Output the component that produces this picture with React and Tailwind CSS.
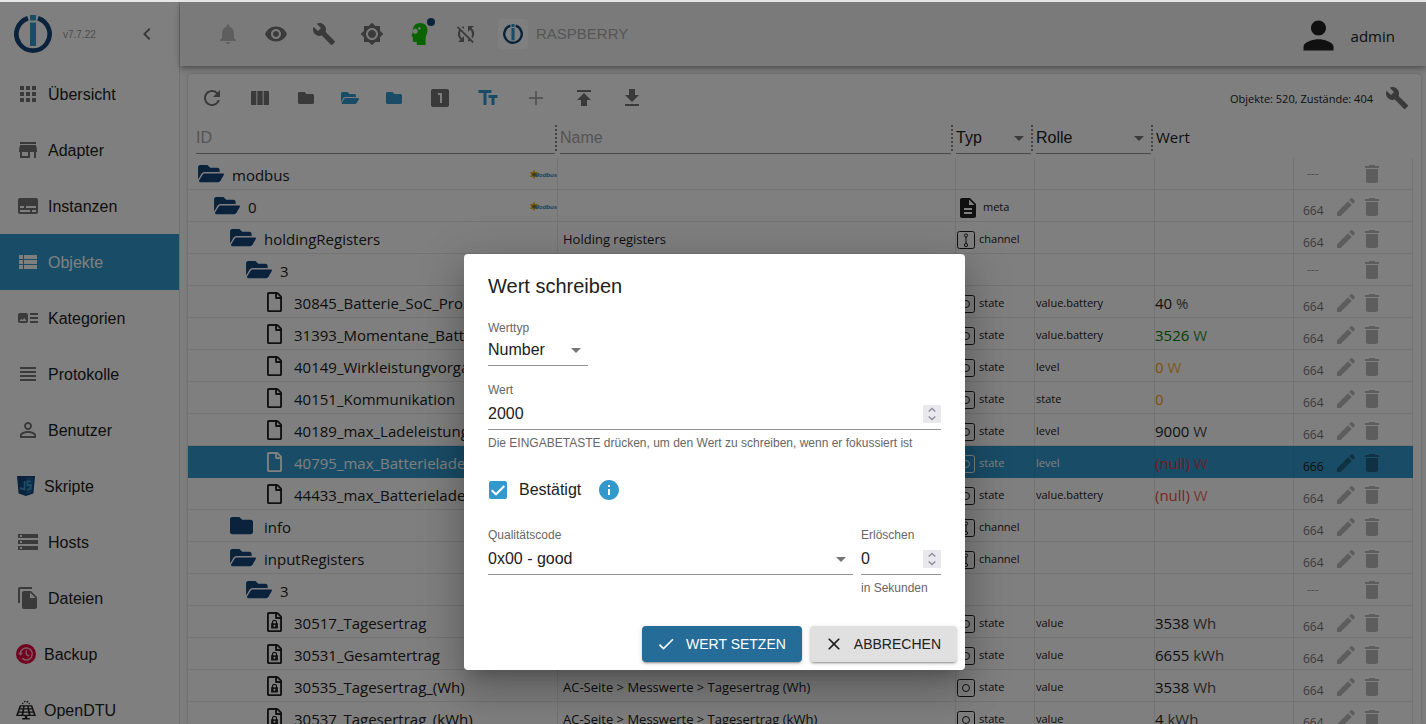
import React, { useState } from 'react';
import {
  MdApps, MdStore, MdSubtitles, MdViewList, MdArtTrack, MdViewHeadline, MdPersonOutline, MdStorage, MdFileCopy,
  MdChevronLeft, MdNotifications, MdVisibility, MdBuild, MdBrightness7, MdSyncDisabled, MdPerson, MdRefresh,
  MdViewColumn, MdLooksOne, MdTextFields, MdAdd, MdPublish, MdFileDownload, MdArrowDropDown, MdDescription,
  MdEdit, MdDelete, MdInfo, MdCheck, MdClose,
} from 'react-icons/md';
import { FaFolder, FaFolderOpen, FaRegFile } from 'react-icons/fa';

function Logo({ className }) {
  return (
    <svg viewBox="0 0 38 38" className={className} aria-hidden="true">
      <path d="M14 3.2A16.6 16.6 0 1 0 24 3.2" fill="none" stroke="#144578" strokeWidth="4.6" />
      <rect x="16" y="0" width="6" height="5.5" fill="#3399cc" />
      <rect x="16" y="7.5" width="6" height="23.5" fill="#3399cc" />
    </svg>
  );
}

function ScriptIcon() {
  return (
    <svg viewBox="0 0 20 20" className="size-5" aria-hidden="true">
      <path d="M1 0h18l-1.6 17.4L10 20l-7.400-2.600z" fill="#144578" />
      <path d="M10 1.500h7.300l-1.400 14.800L10 18.300z" fill="#1c5f94" />
      <path d="M8.500 5v8.500L5 12.800v-1.600M15 5.500h-3.700v3.700h3.500l-.3 3.700-3.400.9" fill="none" stroke="#3f9fd0" strokeWidth="1.700" />
    </svg>
  );
}

function BackupIcon() {
  return (
    <svg viewBox="0 0 20 20" className="size-5" aria-hidden="true">
      <circle cx="10" cy="10" r="10" fill="#e5003c" />
      <path d="M4.300 9.500a6 6 0 1 1 1.900 4.900" fill="none" stroke="#f3b6c4" strokeWidth="1.500" />
      <path d="M1.800 8.800h5.200l-2.600 3z" fill="#f3b6c4" />
      <path d="M10.300 6.300V10.300l2.900 1.900" fill="none" stroke="#f3b6c4" strokeWidth="1.400" />
    </svg>
  );
}

function SolarIcon() {
  return (
    <svg viewBox="0 0 20 20" className="size-5" aria-hidden="true">
      <path d="M6.500 4.200a3.600 3.600 0 0 1 7 0" fill="none" stroke="#222" strokeWidth="1.300" strokeDasharray="1.500 1.200" />
      <path d="M3.800 5.200h12.400L20 16H0z" fill="#222" />
      <path d="M5 6.500h2.300L6.900 8.300H4.400zM8.600 6.500h2.800v1.800H8.400zM12.700 6.500H15l.6 1.800h-2.500zM3.900 9.600h2.700l-.4 1.900H3.300zM8.200 9.600h3.600l.2 1.900H8zM13.400 9.600h2.700l.6 1.900h-2.900zM2.800 12.800h3.100l-.4 1.900H2.200zM7.700 12.800h4.600l.3 1.900H7.400zM14.100 12.800h3.100l.6 1.900h-3.300z" fill="#fff" />
      <path d="M8.800 16h2.400v2h2.600v1.500H6.200V18h2.600z" fill="#222" />
    </svg>
  );
}

function HeadIcon() {
  return (
    <svg viewBox="0 0 24 24" className="size-6" aria-hidden="true">
      <path fillRule="evenodd" fill="#12c900" d="M12 1c5 0 7.500 3.200 7.500 7.400 0 3.400-1.900 5-1.900 7.400V23H8.800v-3H6.200c-1 0-1.400-.6-1.400-1.500v-3L3.400 13.300 4.600 11C4 5 7 1 12 1zM7.200 6.800a2.500 2.500 0 1 0 .01 0zM11.300 5a1.300 1.300 0 1 0 .01 0z" />
    </svg>
  );
}

function LockedFile() {
  return (
    <svg viewBox="0 0 384 512" className="h-5 w-[15px]" fill="currentColor" aria-hidden="true">
      <path d="M369.900 97.900L286 14C277 5 264.800-.1 252.100-.1H48C21.500 0 0 21.500 0 48v416c0 26.500 21.500 48 48 48h288c26.500 0 48-21.500 48-48V131.900c0-12.700-5.100-25-14.100-34zM332.100 128H256V51.900l76.100 76.100zM48 464V48h160v104c0 13.300 10.700 24 24 24h104v288H48z" />
      <path fillRule="evenodd" d="M105 290h20v-22c0-40 26-68 67-68s67 28 67 68v22h20v130H105zM155 290h74v-22c0-22-14-36-37-36s-37 14-37 36zM192 325a26 26 0 1 0 .1 0z" />
    </svg>
  );
}

function StateIcon() {
  return (
    <svg viewBox="0 0 20 20" className="size-5" fill="none" stroke="currentColor" aria-hidden="true">
      <rect x="1.500" y="1.500" width="17" height="17" rx="2" />
      <circle cx="10" cy="10" r="3.500" />
    </svg>
  );
}

function ChannelIcon() {
  return (
    <svg viewBox="0 0 20 20" className="size-5" fill="none" stroke="currentColor" aria-hidden="true">
      <rect x="1.500" y="1.500" width="17" height="17" rx="2" />
      <path d="M10 7v6" />
      <circle cx="10" cy="5.500" r="1.600" />
      <circle cx="10" cy="15" r="1.600" />
    </svg>
  );
}

function ModbusLogo() {
  return (
    <svg viewBox="0 0 28 12" className="h-3 w-7 shrink-0" aria-hidden="true">
      <path d="M5 1.500l1.200 2.800 3-.4-1.600 2.600 1.600 2.500-3-.2L5 11 3.800 8.800.8 9l1.600-2.500L.8 3.900l3 .4z" fill="#e8b000" />
      <circle cx="5" cy="6.500" r="1.600" fill="#8a6a00" />
      <text x="5" y="8.500" fontSize="6" fontWeight="700" fontStyle="italic" fontFamily="Liberation Sans, sans-serif" fill="#1f86bd">Modbus</text>
    </svg>
  );
}

const NAV = [
  ['Übersicht', MdApps], ['Adapter', MdStore], ['Instanzen', MdSubtitles], ['Objekte', MdViewList],
  ['Kategorien', MdArtTrack], ['Protokolle', MdViewHeadline], ['Benutzer', MdPersonOutline],
  ['Skripte', ScriptIcon, true], ['Hosts', MdStorage], ['Dateien', MdFileCopy],
  ['Backup', BackupIcon, true], ['OpenDTU', SolarIcon, true],
];

const ROWS = [
  { id: 'modbus', level: 0, icon: 'open', logo: true },
  { id: '0', level: 1, icon: 'open', logo: true, type: 'meta', acl: '664' },
  { id: 'holdingRegisters', level: 2, icon: 'open', name: 'Holding registers', type: 'channel', acl: '664' },
  { id: '3', level: 3, icon: 'open' },
  { id: '30845_Batterie_SoC_Prozent', level: 4, icon: 'file', type: 'state', role: 'value.battery', value: '40', unit: '%', acl: '664' },
  { id: '31393_Momentane_Batterieladung', level: 4, icon: 'file', type: 'state', role: 'value.battery', value: '3526', unit: 'W', tone: 'text-[#008000]', acl: '664' },
  { id: '40149_Wirkleistungvorgabe', level: 4, icon: 'file', type: 'state', role: 'level', value: '0', unit: 'W', tone: 'text-[#ffa500]', acl: '664' },
  { id: '40151_Kommunikation', level: 4, icon: 'file', type: 'state', role: 'state', value: '0', tone: 'text-[#ffa500]', acl: '664' },
  { id: '40189_max_Ladeleistung', level: 4, icon: 'file', type: 'state', role: 'level', value: '9000', unit: 'W', acl: '664' },
  { id: '40795_max_Batterieladeleistung', level: 4, icon: 'file', type: 'state', role: 'level', value: '(null)', unit: 'W', tone: 'text-[#e0353f]', acl: '666', selected: true },
  { id: '44433_max_Batterieladeleistung', level: 4, icon: 'file', type: 'state', role: 'value.battery', value: '(null)', unit: 'W', tone: 'text-[#f44848]', acl: '664' },
  { id: 'info', level: 2, icon: 'closed', type: 'channel', acl: '664' },
  { id: 'inputRegisters', level: 2, icon: 'open', type: 'channel', acl: '664' },
  { id: '3', level: 3, icon: 'open' },
  { id: '30517_Tagesertrag', level: 4, icon: 'locked', type: 'state', role: 'value', value: '3538', unit: 'Wh', acl: '664' },
  { id: '30531_Gesamtertrag', level: 4, icon: 'locked', type: 'state', role: 'value', value: '6655', unit: 'kWh', acl: '664' },
  { id: '30535_Tagesertrag_(Wh)', level: 4, icon: 'locked', name: 'AC-Seite > Messwerte > Tagesertrag (Wh)', type: 'state', role: 'value', value: '3538', unit: 'Wh', acl: '664' },
  { id: '30537_Tagesertrag_(kWh)', level: 4, icon: 'locked', name: 'AC-Seite > Messwerte > Tagesertrag (kWh)', type: 'state', role: 'value', value: '4', unit: 'kWh', acl: '664' },
];

const INDENT = ['pl-2.5', 'pl-[26px]', 'pl-[42px]', 'pl-[58px]', 'pl-[74px]'];

function RowIcon({ kind }) {
  if (kind === 'open') return <FaFolderOpen className="h-[23px] w-[26px] shrink-0 text-[#144578]" />;
  if (kind === 'closed') return <FaFolder className="mr-[3px] size-[23px] shrink-0 text-[#144578]" />;
  return (
    <span className="flex w-6 shrink-0 justify-center">
      {kind === 'file' ? <FaRegFile className="h-5 w-[15px]" /> : <LockedFile />}
    </span>
  );
}

function TypeIcon({ type }) {
  if (type === 'meta') return <MdDescription className="size-6 shrink-0" />;
  if (type === 'channel') return <ChannelIcon />;
  return <StateIcon />;
}

function ObjectRow({ row }) {
  const cell = row.selected ? 'border-b border-r border-[#3399cc] border-r-[#2f90c1] p-0' : 'border-b border-r border-[#e8e8e8] p-0';
  const text = row.selected ? 'text-white' : 'text-[#212121]';
  const action = row.selected ? 'text-black/35' : 'text-black/27';
  return (
    <tr className={row.selected ? 'h-8 bg-[#3399cc]' : 'h-8'}>
      <td className={cell}>
        <div className={`flex h-[31px] items-center gap-2 overflow-hidden text-[15px] ${INDENT[row.level]} ${text}`}>
          <RowIcon kind={row.icon} />
          <span className="min-w-0 flex-1 pt-0.5 leading-6 whitespace-nowrap">{row.id}</span>
          {row.logo && <ModbusLogo />}
        </div>
      </td>
      <td className={cell}>
        <div className={`truncate pt-0.5 pl-[5px] text-[13px] leading-5 ${text}`}>{row.name}</div>
      </td>
      <td className={cell}>
        {row.type && (
          <div className={`flex h-[31px] items-center gap-[3px] pt-1 text-[11px] ${text}`}>
            <TypeIcon type={row.type} />
            <span className="pb-0.5 leading-4">{row.type}</span>
          </div>
        )}
      </td>
      <td className={cell}>
        <div className={`truncate pt-0.5 pl-px text-[11px] leading-4 ${text}`}>{row.role}</div>
      </td>
      <td className={cell}>
        <div className={`pt-0.5 text-[15px] leading-6 ${row.tone || 'text-[#212121]'}`}>
          {row.value}
          {row.unit && <span className="opacity-80"> {row.unit}</span>}
        </div>
      </td>
      <td className={cell}>
        <div className="flex h-[31px] items-center">
          <span className={row.acl ? `w-10 pt-2.5 pl-[9px] text-xs leading-4 ${row.selected ? 'text-[#212121]' : 'text-[#757575]'}` : 'w-10 pl-[13px] text-xs leading-4 text-[#a0a0a0]'}>
            {row.acl || '---'}
          </span>
          {row.acl ? (
            <button type="button" aria-label={`${row.id} bearbeiten`} className={`pt-0.5 ${action}`}>
              <MdEdit className="size-6" />
            </button>
          ) : (
            <span className="w-6" />
          )}
          <button type="button" aria-label={`${row.id} löschen`} className={`ml-0.5 ${row.acl ? 'pt-0.5' : ''} ${action}`}>
            <MdDelete className="size-6" />
          </button>
        </div>
      </td>
    </tr>
  );
}

function ResizeHandle() {
  return <span className="h-[26px] shrink-0 border-l-2 border-dotted border-[#8a8a8a]" />;
}

function FilterSelect({ label }) {
  return (
    <div className="relative min-w-0 flex-1">
      <select aria-label={label} className="h-8 w-full appearance-none border-b border-[#949494] text-base text-[#212121]">
        <option>{label}</option>
      </select>
      <MdArrowDropDown className="pointer-events-none absolute top-1 right-0 size-6 text-[#757575]" />
    </div>
  );
}

function ObjectTable() {
  return (
    <table className="w-full table-fixed border-separate border-spacing-0 font-['Open_Sans','Noto_Sans',sans-serif]">
      <colgroup>
        <col className="w-[370px]" />
        <col />
        <col className="w-[79px]" />
        <col className="w-[120px]" />
        <col className="w-[139px]" />
        <col className="w-[119px]" />
      </colgroup>
      <thead className="font-['Liberation_Sans',Arial,sans-serif]">
        <tr className="h-9 align-top font-normal">
          <th className="p-0 font-normal">
            <div className="flex items-center pr-px pl-2">
              <input aria-label="ID" placeholder="ID" className="h-8 min-w-0 flex-1 border-b border-[#949494] outline-none placeholder:text-[#a8a8a8]" />
              <ResizeHandle />
            </div>
          </th>
          <th className="p-0 font-normal">
            <div className="flex items-center pr-[3px] pl-0.5">
              <input aria-label="Name" placeholder="Name" className="h-8 min-w-0 flex-1 border-b border-[#949494] outline-none placeholder:text-[#a8a8a8]" />
              <ResizeHandle />
            </div>
          </th>
          <th className="p-0 font-normal">
            <div className="flex items-center pr-0.5">
              <FilterSelect label="Typ" />
              <ResizeHandle />
            </div>
          </th>
          <th className="p-0 font-normal">
            <div className="flex items-center pr-0.5 pl-px">
              <FilterSelect label="Rolle" />
              <ResizeHandle />
            </div>
          </th>
          <th className="p-0 pl-px text-left font-['Open_Sans','Noto_Sans',sans-serif] text-[15px] leading-[30px] font-normal text-[#212121]">Wert</th>
          <th className="p-0" aria-label="Aktionen" />
        </tr>
      </thead>
      <tbody>
        {ROWS.map((row, i) => (
          <ObjectRow key={i} row={row} />
        ))}
      </tbody>
    </table>
  );
}

function ToolButton({ label, className, children }) {
  return (
    <button type="button" aria-label={label} className={`flex h-12 shrink-0 items-center justify-center ${className}`}>
      {children}
    </button>
  );
}

function Sidebar() {
  return (
    <aside className="flex w-[180px] shrink-0 flex-col border-r border-[#dedede] bg-white">
      <div className="flex h-16 shrink-0 items-center pr-5 pl-3.5">
        <Logo className="size-[38px]" />
        <span className="ml-[11px] flex-1 text-[10px] text-[#9a9a9a]">v7.7.22</span>
        <button type="button" aria-label="Menü einklappen" className="text-[#757575]">
          <MdChevronLeft className="size-6" />
        </button>
      </div>
      <nav className="flex flex-col">
        {NAV.map(([label, Icon]) => {
          const active = label === 'Objekte';
          return (
            <a key={label} href="#" className={`flex h-14 shrink-0 items-center gap-2 pl-4 text-base ${active ? 'bg-[#3399cc] text-white' : 'text-[#212121]'}`}>
              <Icon className={`size-6 shrink-0 ${active ? 'text-white' : 'text-[#757575]'}`} />
              <span className="pt-0.5">{label}</span>
            </a>
          );
        })}
      </nav>
    </aside>
  );
}

function Header() {
  return (
    <header className="relative z-10 flex h-16 shrink-0 items-center bg-[#f5f5f5] pl-6 text-[#757575] shadow-[0_2px_4px_-1px_rgba(0,0,0,0.2),0_4px_5px_0_rgba(0,0,0,0.14),0_1px_10px_0_rgba(0,0,0,0.12)]">
      <ToolButton label="Benachrichtigungen" className="w-12 text-[#bdbdbd]"><MdNotifications className="size-6" /></ToolButton>
      <ToolButton label="Ansicht" className="w-12"><MdVisibility className="size-6" /></ToolButton>
      <ToolButton label="Einstellungen" className="w-12"><MdBuild className="size-6" /></ToolButton>
      <ToolButton label="Farbschema" className="w-12"><MdBrightness7 className="size-6" /></ToolButton>
      <ToolButton label="Expertenmodus" className="relative w-12">
        <HeadIcon />
        <span className="absolute top-2 right-[9px] size-2 rounded-full bg-[#144578]" />
      </ToolButton>
      <ToolButton label="Synchronisation" className="w-11"><MdSyncDisabled className="size-6" /></ToolButton>
      <a href="#" className="ml-2.5 flex items-center gap-2 text-[15px] text-[#adadad]">
        <span className="flex size-[30px] items-center justify-center rounded-sm bg-white"><Logo className="size-5" /></span>
        RASPBERRY
      </a>
      <div className="mr-[31px] ml-auto flex items-center gap-2.5 pt-0.5 font-['Open_Sans','Noto_Sans',sans-serif] text-[15px] text-[#212121]">
        <MdPerson className="size-[45px]" />
        <span className="pt-0.5">admin</span>
      </div>
    </header>
  );
}

function Toolbar() {
  return (
    <div className="flex h-12 shrink-0 items-center text-[#757575]">
      <ToolButton label="Aktualisieren" className="w-12"><MdRefresh className="size-6" /></ToolButton>
      <ToolButton label="Spalten" className="w-12"><MdViewColumn className="size-6" /></ToolButton>
      <ToolButton label="Alle schließen" className="w-11"><FaFolder className="size-4" /></ToolButton>
      <ToolButton label="Alle öffnen" className="w-11 text-[#3399cc]"><FaFolderOpen className="h-4 w-[18px]" /></ToolButton>
      <ToolButton label="Eine Ebene schließen" className="w-11 text-[#3399cc]"><FaFolder className="size-4" /></ToolButton>
      <ToolButton label="Zustände" className="w-12"><MdLooksOne className="size-6" /></ToolButton>
      <ToolButton label="Beschreibungen" className="w-12 text-[#3399cc]"><MdTextFields className="size-6" /></ToolButton>
      <ToolButton label="Hinzufügen" className="w-12 text-[#b0b0b0]"><MdAdd className="size-6" /></ToolButton>
      <ToolButton label="Hochladen" className="w-12"><MdPublish className="size-6" /></ToolButton>
      <ToolButton label="Herunterladen" className="w-12"><MdFileDownload className="size-6" /></ToolButton>
      <span className="ml-auto pt-0.5 font-['Open_Sans','Noto_Sans',sans-serif] text-[11px] text-[#212121]">Objekte: 520, Zustände: 404</span>
      <ToolButton label="Tabelle anpassen" className="w-12"><MdBuild className="size-6" /></ToolButton>
    </div>
  );
}

function NumberField({ id, label, hint, value, onChange }) {
  const step = (d) => onChange(String(Number(value) + d));
  return (
    <div>
      <label htmlFor={id} className="block text-xs leading-5 text-[#666]">{label}</label>
      <div className="flex h-[30px] items-center border-b border-[#949494] pb-0.5">
        <input
          id={id}
          type="number"
          value={value}
          onChange={(e) => onChange(e.target.value)}
          className="min-w-0 flex-1 text-base leading-6 text-[#212121] outline-none [appearance:textfield] [&::-webkit-inner-spin-button]:appearance-none"
        />
        <span className="flex size-[18px] flex-col bg-[#e9e9ed] text-[#8f8f9d]">
          <button type="button" aria-label={`${label} erhöhen`} onClick={() => step(1)} className="flex h-[9px] items-end justify-center">
            <svg viewBox="0 0 8 6" className="mb-px h-1.5 w-2" fill="none" stroke="currentColor" strokeWidth="1.500"><path d="M.7 4.500L4 1.500l3.300 3" /></svg>
          </button>
          <button type="button" aria-label={`${label} verringern`} onClick={() => step(-1)} className="flex h-[9px] items-start justify-center">
            <svg viewBox="0 0 8 6" className="mt-px h-1.5 w-2" fill="none" stroke="currentColor" strokeWidth="1.500"><path d="M.7 1.500L4 4.500l3.300-3" /></svg>
          </button>
        </span>
      </div>
      <p className="mt-[3px] text-xs leading-5 whitespace-nowrap text-[#666]">{hint}</p>
    </div>
  );
}

function SelectField({ id, label, option, height, arrow }) {
  return (
    <div>
      <label htmlFor={id} className="block text-xs leading-5 text-[#666]">{label}</label>
      <div className="relative">
        <select id={id} className={`block w-full appearance-none border-b border-[#949494] text-base text-[#212121] ${height}`}>
          <option>{option}</option>
        </select>
        <MdArrowDropDown className={`pointer-events-none absolute right-0 size-6 text-[#757575] ${arrow}`} />
      </div>
    </div>
  );
}

function WriteDialog() {
  const [value, setValue] = useState('2000');
  const [expire, setExpire] = useState('0');
  return (
    <div role="dialog" aria-labelledby="dialog-title" className="w-[501px] rounded-sm bg-white shadow-[0_11px_15px_-7px_rgba(0,0,0,0.2),0_24px_38px_3px_rgba(0,0,0,0.14),0_9px_46px_8px_rgba(0,0,0,0.12)]">
      <h2 id="dialog-title" className="px-6 py-4 text-xl leading-8 text-[#212121]">Wert schreiben</h2>
      <div className="px-6">
        <div className="w-[100px]">
          <SelectField id="value-type" label="Werttyp" option="Number" height="h-7 pb-1" arrow="top-0" />
        </div>
        <div className="mt-3.5">
          <NumberField id="value" label="Wert" hint="Die EINGABETASTE drücken, um den Wert zu schreiben, wenn er fokussiert ist" value={value} onChange={setValue} />
        </div>
        <div className="mt-4 flex h-[42px] items-center">
          <label className="flex items-center gap-3 text-base text-[#212121]">
            <span className="relative ml-px block size-[18px]">
              <input type="checkbox" defaultChecked className="peer block size-[18px] appearance-none rounded-xs border-2 border-[#757575] checked:border-[#3399cc] checked:bg-[#3399cc]" />
              <svg viewBox="0 0 18 18" className="pointer-events-none absolute inset-0 hidden size-[18px] peer-checked:block" fill="none" stroke="#fff" strokeWidth="2" aria-hidden="true"><path d="M2.700 9.300L7 13.300 15.300 5" /></svg>
            </span>
            Bestätigt
          </label>
          <MdInfo className="ml-4 size-6 text-[#3399cc]" />
        </div>
        <div className="mt-3.5 flex gap-2">
          <div className="flex-1">
            <SelectField id="quality" label="Qualitätscode" option="0x00 - good" height="h-[30px] pb-0.5" arrow="top-0.5" />
          </div>
          <div className="w-20">
            <NumberField id="expire" label="Erlöschen" hint="in Sekunden" value={expire} onChange={setExpire} />
          </div>
        </div>
      </div>
      <div className="mt-7 flex justify-end gap-2 pr-2 pb-2">
        <button type="button" className="flex h-9 items-center gap-2.5 rounded-sm bg-[#256c98] pr-4 pl-3.5 text-sm text-white shadow-[0_3px_1px_-2px_rgba(0,0,0,0.2),0_2px_2px_0_rgba(0,0,0,0.14),0_1px_5px_0_rgba(0,0,0,0.12)]">
          <MdCheck className="size-5" />
          WERT SETZEN
        </button>
        <button type="button" className="flex h-9 items-center gap-2.5 rounded-sm bg-[#e0e0e0] pr-4 pl-3.5 text-sm text-[#212121] shadow-[0_3px_1px_-2px_rgba(0,0,0,0.2),0_2px_2px_0_rgba(0,0,0,0.14),0_1px_5px_0_rgba(0,0,0,0.12)]">
          <MdClose className="size-5" />
          ABBRECHEN
        </button>
      </div>
    </div>
  );
}

export default function App() {
  return (
    <div className="h-screen overflow-hidden border-t-2 border-[#e4e6e8] bg-[#fafafa] font-['Liberation_Sans',Arial,sans-serif]">
      <div className="relative flex h-full overflow-hidden">
        <Sidebar />
        <div className="flex min-w-0 flex-1 flex-col">
          <Header />
          <main className="min-h-0 flex-1 pt-2 pr-[5px] pl-2">
            <section className="h-full overflow-hidden rounded-t-sm bg-white shadow-[0_0_3px_rgba(0,0,0,0.25)]">
              <Toolbar />
              <div className="pr-2">
                <ObjectTable />
              </div>
            </section>
          </main>
        </div>
        <div className="absolute inset-0 z-20 flex items-start justify-center bg-black/50 pt-[252px] pl-[3px]">
          <WriteDialog />
        </div>
      </div>
    </div>
  );
}
